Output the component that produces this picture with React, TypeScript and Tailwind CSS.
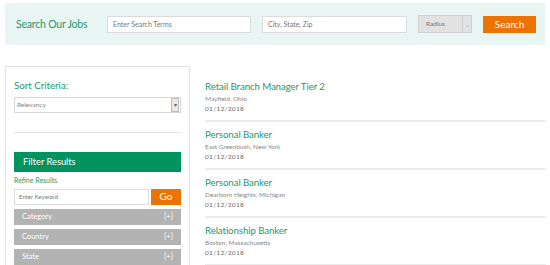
import React from "react";

const jobs = [
  { title: "Retail Branch Manager Tier 2", loc: "Mayfield, Ohio", date: "01/12/2018" },
  { title: "Personal Banker", loc: "East Greenbush, New York", date: "01/12/2018" },
  { title: "Personal Banker", loc: "Dearborn Heights, Michigan", date: "01/12/2018" },
  { title: "Relationship Banker", loc: "Boston, Massachusetts", date: "01/12/2018" },
];

export default function App() {
  return (
    <div className="w-[550px] h-[265px] overflow-hidden bg-white" style={{ fontFamily: "Lato, 'Open Sans', sans-serif" }}>
      <div className="pt-[3px] px-[5px]">
        <div className="h-[42px] bg-[#e9f5f2] flex items-center">
          <div className="ml-[11px] w-[91px] text-[10.5px] tracking-[-0.2px] text-[#239a6c] leading-none">Search Our Jobs</div>
          <div className="w-[144px] h-[17px] bg-white border border-[#dcdcdc] text-[7px] text-[#777] flex items-center pl-[5px]">Enter Search Terms</div>
          <div className="ml-[11px] w-[145px] h-[17px] bg-white border border-[#dcdcdc] text-[7px] text-[#777] flex items-center pl-[5px]">City, State, Zip</div>
          <div className="ml-[11px] w-[54px] h-[18px] bg-[#e2e2e2] border border-[#d0d0d0] text-[6.5px] text-[#777] flex items-center">
            <span className="pl-[7px] flex-1">Radius</span>
            <span className="w-[9px] h-full border-l border-[#cfcfcf] flex items-center justify-center text-[6px] text-[#aaa]">⌄</span>
          </div>
          <div className="ml-[11px] w-[53px] h-[17px] bg-[#ec7404] text-white text-[10px] flex items-center justify-center">Search</div>
        </div>
      </div>

      <div className="flex mt-[21px]">
        <div className="ml-[5px] w-[185px] h-[210px] border border-[#e2e2e2] border-b-0 px-[8px]">
          <div className="mt-[14px] text-[9.7px] text-[#239a6c] leading-none">Sort Criteria:</div>
          <div className="mt-[6px] h-[16px] border border-[#d6d6d6] bg-white flex items-center text-[6.5px] text-[#888]">
            <span className="pl-[2px] flex-1">Relevancy</span>
            <span className="w-[8px] h-[14px] mr-[1px] bg-[#e8e8e8] border border-[#bbb] flex items-center justify-center text-[6px] text-[#666] leading-none">▾</span>
          </div>
          <div className="mt-[19px] border-t border-[#e3e3e3]" />
          <div className="mt-[19px] h-[20px] bg-[#00935f] text-white text-[9.3px] flex items-center pl-[9px]">Filter Results</div>
          <div className="mt-[5px] text-[7px] text-[#239a6c] leading-none">Refine Results</div>
          <div className="mt-[5px] flex h-[16px]">
            <div className="w-[135px] border border-[#dcdcdc] flex items-center pl-[4px] text-[6px] text-[#777]">Enter Keyword</div>
            <div className="ml-[2px] flex-1 bg-[#ec7404] text-white text-[10px] flex items-center justify-center">Go</div>
          </div>
          {["Category", "Country", "State"].map((n) => (
            <div key={n} className="mt-[4px] h-[16px] bg-[#b3b3b3] text-white text-[7.5px] flex items-center justify-between pl-[8px] pr-[8px]">
              <span>{n}</span>
              <span>[+]</span>
            </div>
          ))}
        </div>

        <div className="ml-[15px] w-[341px] pt-[8px]">
          {jobs.map((j, i) => (
            <div key={i} className="h-[48px] border-b-2 border-[#ececec] pt-[6px]">
              <div className="text-[9.7px] tracking-[-0.1px] text-[#239a6c] leading-[13px]">{j.title}</div>
              <div className="text-[6.5px] text-[#888] leading-[11px]">{j.loc}</div>
              <div className="text-[6.5px] text-[#666] leading-[10px] tracking-[0.3px]">{j.date}</div>
            </div>
          ))}
        </div>
      </div>
    </div>
  );
}
